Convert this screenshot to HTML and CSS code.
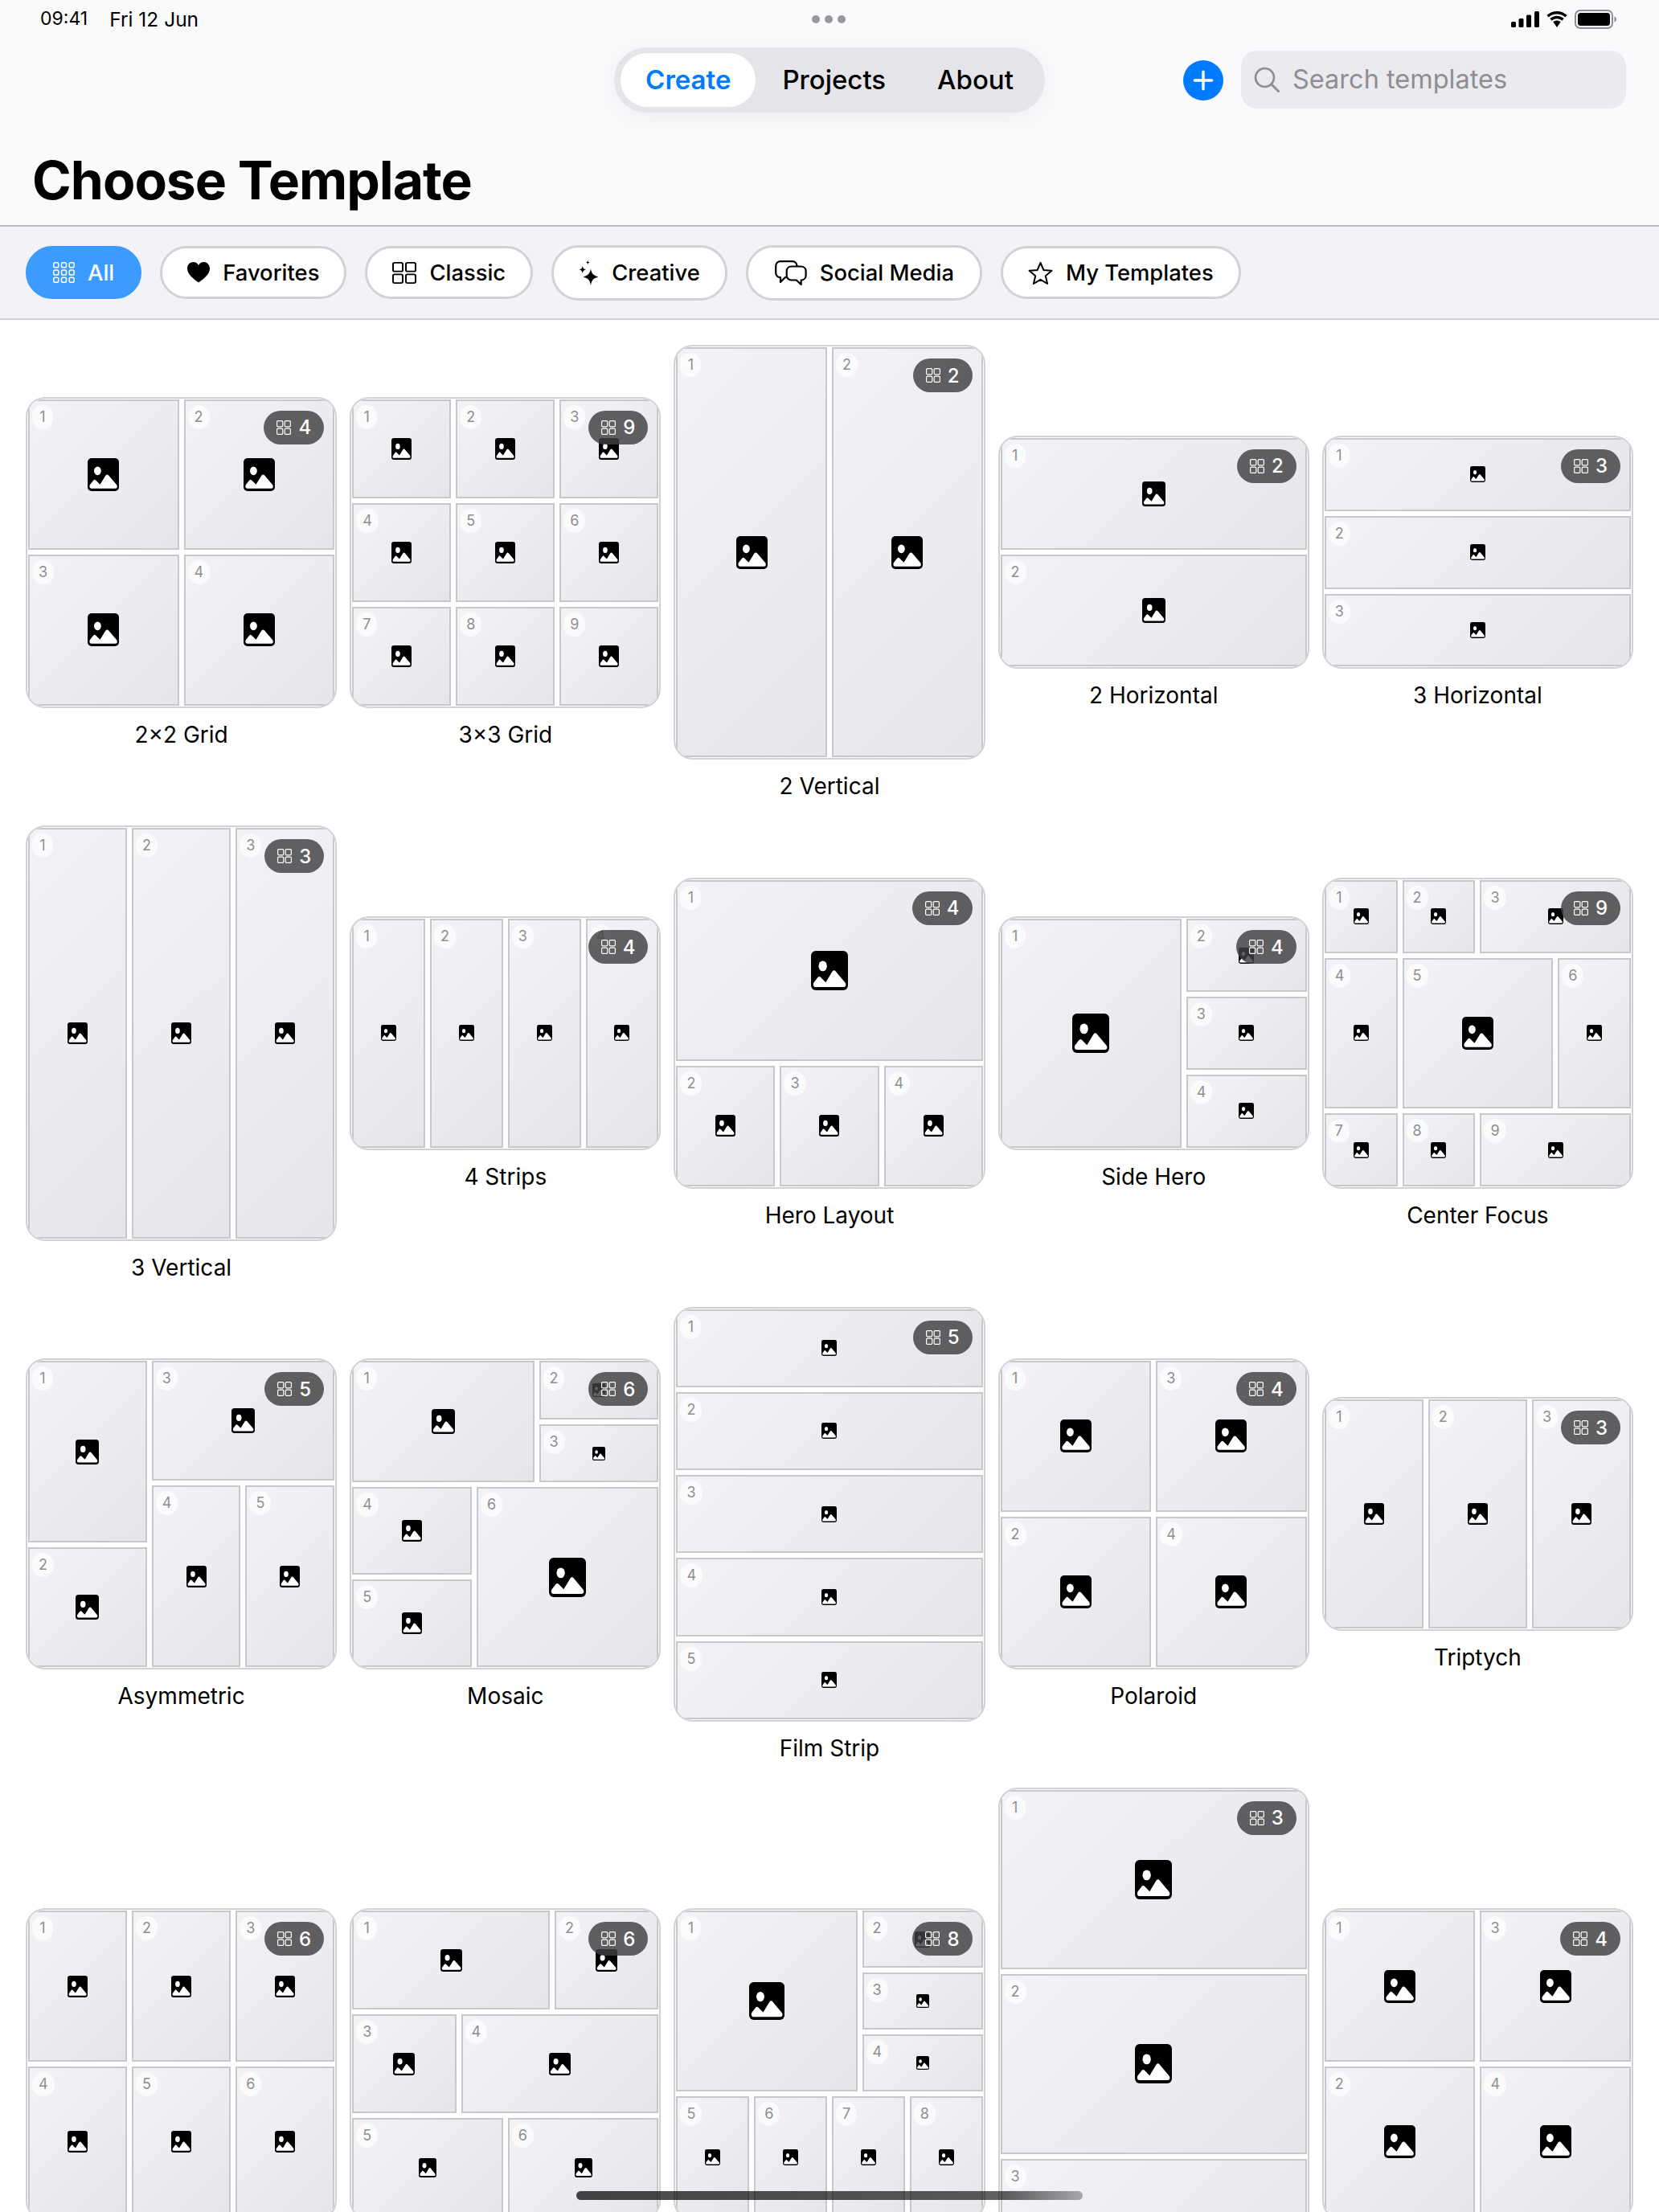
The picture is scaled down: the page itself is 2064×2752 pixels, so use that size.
FILE: index.html
```html
<!DOCTYPE html>
<html lang="en">
<head>
    <meta charset="UTF-8">
    <meta name="viewport" content="width=device-width, initial-scale=1.0">
    <title>Choose Template</title>
    <link rel="stylesheet" href="styles.css">
</head>
<body>
    <svg class="sprite" aria-hidden="true">
        <symbol id="i-photo" viewBox="0 0 39 41" preserveAspectRatio="none">
            <rect width="39" height="41" rx="5" fill="#000"/>
            <ellipse cx="12.4" cy="15.8" rx="4.4" ry="5.4" fill="#fff"/>
            <path d="M2.4 35.2c0-1.2.5-2.2 1.3-3.1l3.6-4.6c.8-1 2-1 2.8 0l5.4 5.3 6.9-11.3c1-1.5 2.8-1.5 3.8 0l9.8 11.6c.5.7.8 1.4.8 2.3 0 1.300-1 2.300-2.400 2.300H4.800c-1.400 0-2.400-1-2.400-2.500z" fill="#fff"/>
        </symbol>
        <symbol id="i-grid2" viewBox="0 0 18 18">
            <g fill="none" stroke="currentColor" stroke-width="1.2">
                <rect x=".6" y=".6" width="7.2" height="7.200" rx="1.200"/>
                <rect x="10.200" y=".6" width="7.200" height="7.200" rx="1.200"/>
                <rect x=".6" y="10.200" width="7.200" height="7.200" rx="1.200"/>
                <rect x="10.200" y="10.200" width="7.200" height="7.200" rx="1.200"/>
            </g>
        </symbol>
    </svg>

    <div class="app">
        <header class="top">
            <div class="status">
                <div class="status-time"><span>09:41</span><span class="status-date">Fri 12 Jun</span></div>
                <div class="status-dots"><i></i><i></i><i></i></div>
                <div class="status-icons">
                    <svg class="ic-signal" viewBox="0 0 35 20"><rect x="0" y="13" width="6" height="7" rx="1.500"/><rect x="9.500" y="9" width="6" height="11" rx="1.500"/><rect x="19" y="4.500" width="6" height="15.500" rx="1.500"/><rect x="29" y="0" width="6" height="20" rx="1.500"/></svg>
                    <svg class="ic-wifi" viewBox="0 0 28 20"><path d="M14 3.500c4 0 7.600 1.500 10.300 4.100l2.300-2.600C23.300 1.900 18.900 0 14 0S4.700 1.900 1.400 5l2.300 2.600C6.400 5 10 3.500 14 3.500z"/><path d="M14 9.200c2.500 0 4.700.9 6.400 2.500l2.300-2.600C20.400 7 17.400 5.700 14 5.700S7.600 7 5.300 9.100l2.300 2.600c1.700-1.600 3.900-2.500 6.400-2.500z"/><path d="M14 11.500c-1.900 0-3.500.7-4.700 1.800L14 20l4.700-6.700c-1.200-1.100-2.800-1.800-4.700-1.800z"/></svg>
                    <svg class="ic-battery" viewBox="0 0 52 24"><rect x="1" y="1" width="46" height="22" rx="6" fill="none" stroke="#8e8e93" stroke-width="2"/><rect x="4" y="4" width="40" height="16" rx="3.500"/><path d="M49.500 8.500c1.500.5 2.500 2 2.500 3.500s-1 3-2.500 3.500z" fill="#8e8e93"/></svg>
                </div>
            </div>

            <div class="toolbar">
                <div></div>
                <nav class="nav">
                    <a class="nav-item active">Create</a>
                    <a class="nav-item">Projects</a>
                    <a class="nav-item">About</a>
                </nav>
                <div class="tools">
                    <button class="add-btn">
                        <svg viewBox="0 0 24 24"><path d="M12 4v16M4 12h16" fill="none" stroke="#fff" stroke-width="2.600" stroke-linecap="round"/></svg>
                    </button>
                    <div class="search">
                        <svg viewBox="0 0 32 32"><circle cx="13.500" cy="13.500" r="11.500" fill="none" stroke="#8e8e93" stroke-width="2.600"/><path d="M22 22l8.500 8.500" fill="none" stroke="#8e8e93" stroke-width="3" stroke-linecap="round"/></svg>
                        <span>Search templates</span>
                    </div>
                </div>
            </div>

            <h1>Choose Template</h1>
        </header>

        <div class="filters">
            <button class="chip chip-on">
                <svg class="chip-all" viewBox="0 0 27 26"><g fill="none" stroke="#fff" stroke-width="1.500"><rect x=".8" y=".8" width="6" height="6" rx="1.800"/><rect x="10.500" y=".8" width="6" height="6" rx="1.800"/><rect x="20.200" y=".8" width="6" height="6" rx="1.800"/><rect x=".8" y="10" width="6" height="6" rx="1.800"/><rect x="10.500" y="10" width="6" height="6" rx="1.800"/><rect x="20.200" y="10" width="6" height="6" rx="1.800"/><rect x=".8" y="19.200" width="6" height="6" rx="1.800"/><rect x="10.500" y="19.200" width="6" height="6" rx="1.800"/><rect x="20.200" y="19.200" width="6" height="6" rx="1.800"/></g></svg>
                All
            </button>
            <button class="chip">
                <svg class="chip-heart" viewBox="0 0 28 26"><path d="M14 25.500C7 20.500 0 15 0 8c0-4.500 3.300-8 7.500-8C10.300 0 12.700 1.500 14 4c1.300-2.500 3.700-4 6.500-4C24.700 0 28 3.500 28 8c0 7-7 12.500-14 17.500z"/></svg>
                Favorites
            </button>
            <button class="chip">
                <svg class="chip-classic" viewBox="0 0 18 18" preserveAspectRatio="none"><use href="#i-grid2"/></svg>
                Classic
            </button>
            <button class="chip chip-tall">
                <svg class="chip-spark" viewBox="0 0 25 31"><path d="M15 10.500c1 5.700 3 8 9.500 10-6.500 1.500-8.500 4.300-9.500 10.500-1-6.200-3-9-9.500-10.500 6.500-2 8.500-4.300 9.500-10.500z"/><path d="M4.800 6.800c.5 2.900 1.300 3.900 4.300 4.700-3 .7-3.800 1.700-4.300 4.700-.5-3-1.300-4-4.300-4.700 3-.8 3.800-1.800 4.300-4.700z"/><path d="M11.300 0c.3 1.500.8 2 2.300 2.500-1.500.4-2 .9-2.300 2.500-.3-1.600-.8-2.100-2.300-2.500 1.500-.5 2-1 2.300-2.500z"/></svg>
                Creative
            </button>
            <button class="chip chip-tall chip-wide">
                <svg class="chip-social" viewBox="0 0 40 31"><g fill="none" stroke="#000" stroke-width="2.200" stroke-linejoin="round"><path d="M27.500 7.500V6.800c0-3.300-2.400-5.700-5.700-5.700H7C3.700 1.100 1.200 3.600 1.200 6.900v8.400c0 3.300 2.400 5.800 5.800 5.900v5.700l5.600-5.700h2"/><path d="M20.500 7.500h12.200c3.400 0 5.900 2.500 5.900 5.800v5.400c0 3.300-2.500 5.800-5.900 5.800v5.500l-5.900-5.500h-6.300c-3.300 0-5.800-2.500-5.800-5.800v-5.400c0-3.300 2.500-5.800 5.800-5.800z"/></g></svg>
                Social Media
            </button>
            <button class="chip">
                <svg class="chip-star" viewBox="0 0 31 29"><path d="M15.500 1.800l3.900 9.200 10 .8-7.600 6.500 2.300 9.700-8.600-5.200-8.600 5.200 2.300-9.700-7.600-6.500 10-.8z" fill="none" stroke="#000" stroke-width="2" stroke-linejoin="round"/></svg>
                My Templates
            </button>
        </div>

        <main class="gallery">

            <div class="tpl">
                <div class="card sq g-2x2">
                    <div class="cell"><span class="num">1</span><svg class="ph ph-lg"><use href="#i-photo"/></svg></div>
                    <div class="cell"><span class="num">2</span><svg class="ph ph-lg"><use href="#i-photo"/></svg></div>
                    <div class="cell"><span class="num">3</span><svg class="ph ph-lg"><use href="#i-photo"/></svg></div>
                    <div class="cell"><span class="num">4</span><svg class="ph ph-lg"><use href="#i-photo"/></svg></div>
                    <span class="badge"><svg><use href="#i-grid2"/></svg>4</span>
                </div>
                <div class="name">2×2 Grid</div>
            </div>

            <div class="tpl">
                <div class="card sq g-3x3">
                    <div class="cell"><span class="num">1</span><svg class="ph ph-md"><use href="#i-photo"/></svg></div>
                    <div class="cell"><span class="num">2</span><svg class="ph ph-md"><use href="#i-photo"/></svg></div>
                    <div class="cell"><span class="num">3</span><svg class="ph ph-md"><use href="#i-photo"/></svg></div>
                    <div class="cell"><span class="num">4</span><svg class="ph ph-md"><use href="#i-photo"/></svg></div>
                    <div class="cell"><span class="num">5</span><svg class="ph ph-md"><use href="#i-photo"/></svg></div>
                    <div class="cell"><span class="num">6</span><svg class="ph ph-md"><use href="#i-photo"/></svg></div>
                    <div class="cell"><span class="num">7</span><svg class="ph ph-md"><use href="#i-photo"/></svg></div>
                    <div class="cell"><span class="num">8</span><svg class="ph ph-md"><use href="#i-photo"/></svg></div>
                    <div class="cell"><span class="num">9</span><svg class="ph ph-md"><use href="#i-photo"/></svg></div>
                    <span class="badge"><svg><use href="#i-grid2"/></svg>9</span>
                </div>
                <div class="name">3×3 Grid</div>
            </div>

            <div class="tpl">
                <div class="card tall g-2col">
                    <div class="cell"><span class="num">1</span><svg class="ph ph-lg"><use href="#i-photo"/></svg></div>
                    <div class="cell"><span class="num">2</span><svg class="ph ph-lg"><use href="#i-photo"/></svg></div>
                    <span class="badge"><svg><use href="#i-grid2"/></svg>2</span>
                </div>
                <div class="name">2 Vertical</div>
            </div>

            <div class="tpl">
                <div class="card wide g-2row">
                    <div class="cell"><span class="num">1</span><svg class="ph ph-ml"><use href="#i-photo"/></svg></div>
                    <div class="cell"><span class="num">2</span><svg class="ph ph-ml"><use href="#i-photo"/></svg></div>
                    <span class="badge"><svg><use href="#i-grid2"/></svg>2</span>
                </div>
                <div class="name">2 Horizontal</div>
            </div>

            <div class="tpl">
                <div class="card wide g-3row">
                    <div class="cell"><span class="num">1</span><svg class="ph ph-sm"><use href="#i-photo"/></svg></div>
                    <div class="cell"><span class="num">2</span><svg class="ph ph-sm"><use href="#i-photo"/></svg></div>
                    <div class="cell"><span class="num">3</span><svg class="ph ph-sm"><use href="#i-photo"/></svg></div>
                    <span class="badge"><svg><use href="#i-grid2"/></svg>3</span>
                </div>
                <div class="name">3 Horizontal</div>
            </div>

            <div class="tpl">
                <div class="card tall g-3col">
                    <div class="cell"><span class="num">1</span><svg class="ph ph-md"><use href="#i-photo"/></svg></div>
                    <div class="cell"><span class="num">2</span><svg class="ph ph-md"><use href="#i-photo"/></svg></div>
                    <div class="cell"><span class="num">3</span><svg class="ph ph-md"><use href="#i-photo"/></svg></div>
                    <span class="badge"><svg><use href="#i-grid2"/></svg>3</span>
                </div>
                <div class="name">3 Vertical</div>
            </div>

            <div class="tpl">
                <div class="card wide g-4col">
                    <div class="cell"><span class="num">1</span><svg class="ph ph-sm"><use href="#i-photo"/></svg></div>
                    <div class="cell"><span class="num">2</span><svg class="ph ph-sm"><use href="#i-photo"/></svg></div>
                    <div class="cell"><span class="num">3</span><svg class="ph ph-sm"><use href="#i-photo"/></svg></div>
                    <div class="cell"><span class="num">4</span><svg class="ph ph-sm"><use href="#i-photo"/></svg></div>
                    <span class="badge"><svg><use href="#i-grid2"/></svg>4</span>
                </div>
                <div class="name">4 Strips</div>
            </div>

            <div class="tpl">
                <div class="card sq g-hero">
                    <div class="cell"><span class="num">1</span><svg class="ph ph-xl"><use href="#i-photo"/></svg></div>
                    <div class="cell"><span class="num">2</span><svg class="ph ph-md"><use href="#i-photo"/></svg></div>
                    <div class="cell"><span class="num">3</span><svg class="ph ph-md"><use href="#i-photo"/></svg></div>
                    <div class="cell"><span class="num">4</span><svg class="ph ph-md"><use href="#i-photo"/></svg></div>
                    <span class="badge"><svg><use href="#i-grid2"/></svg>4</span>
                </div>
                <div class="name">Hero Layout</div>
            </div>

            <div class="tpl">
                <div class="card wide g-side">
                    <div class="cell"><span class="num">1</span><svg class="ph ph-xl"><use href="#i-photo"/></svg></div>
                    <div class="cell"><span class="num">2</span><svg class="ph ph-sm"><use href="#i-photo"/></svg></div>
                    <div class="cell"><span class="num">3</span><svg class="ph ph-sm"><use href="#i-photo"/></svg></div>
                    <div class="cell"><span class="num">4</span><svg class="ph ph-sm"><use href="#i-photo"/></svg></div>
                    <span class="badge"><svg><use href="#i-grid2"/></svg>4</span>
                </div>
                <div class="name">Side Hero</div>
            </div>

            <div class="tpl">
                <div class="card sq g-focus">
                    <div class="cell"><span class="num">1</span><svg class="ph ph-sm"><use href="#i-photo"/></svg></div>
                    <div class="cell"><span class="num">2</span><svg class="ph ph-sm"><use href="#i-photo"/></svg></div>
                    <div class="cell"><span class="num">3</span><svg class="ph ph-sm"><use href="#i-photo"/></svg></div>
                    <div class="cell"><span class="num">4</span><svg class="ph ph-sm"><use href="#i-photo"/></svg></div>
                    <div class="cell"><span class="num">5</span><svg class="ph ph-lg"><use href="#i-photo"/></svg></div>
                    <div class="cell"><span class="num">6</span><svg class="ph ph-sm"><use href="#i-photo"/></svg></div>
                    <div class="cell"><span class="num">7</span><svg class="ph ph-sm"><use href="#i-photo"/></svg></div>
                    <div class="cell"><span class="num">8</span><svg class="ph ph-sm"><use href="#i-photo"/></svg></div>
                    <div class="cell"><span class="num">9</span><svg class="ph ph-sm"><use href="#i-photo"/></svg></div>
                    <span class="badge"><svg><use href="#i-grid2"/></svg>9</span>
                </div>
                <div class="name">Center Focus</div>
            </div>

            <div class="tpl">
                <div class="card sq g-asym">
                    <div class="cell"><span class="num">1</span><svg class="ph ph-ml"><use href="#i-photo"/></svg></div>
                    <div class="cell"><span class="num">2</span><svg class="ph ph-ml"><use href="#i-photo"/></svg></div>
                    <div class="cell"><span class="num">3</span><svg class="ph ph-ml"><use href="#i-photo"/></svg></div>
                    <div class="cell"><span class="num">4</span><svg class="ph ph-md"><use href="#i-photo"/></svg></div>
                    <div class="cell"><span class="num">5</span><svg class="ph ph-md"><use href="#i-photo"/></svg></div>
                    <span class="badge"><svg><use href="#i-grid2"/></svg>5</span>
                </div>
                <div class="name">Asymmetric</div>
            </div>

            <div class="tpl">
                <div class="card sq g-mosaic">
                    <div class="cell"><span class="num">1</span><svg class="ph ph-ml"><use href="#i-photo"/></svg></div>
                    <div class="cell"><span class="num">2</span><svg class="ph ph-xs"><use href="#i-photo"/></svg></div>
                    <div class="cell"><span class="num">3</span><svg class="ph ph-xs"><use href="#i-photo"/></svg></div>
                    <div class="cell"><span class="num">4</span><svg class="ph ph-md"><use href="#i-photo"/></svg></div>
                    <div class="cell"><span class="num">5</span><svg class="ph ph-md"><use href="#i-photo"/></svg></div>
                    <div class="cell"><span class="num">6</span><svg class="ph ph-xl"><use href="#i-photo"/></svg></div>
                    <span class="badge"><svg><use href="#i-grid2"/></svg>6</span>
                </div>
                <div class="name">Mosaic</div>
            </div>

            <div class="tpl">
                <div class="card tall g-5row">
                    <div class="cell"><span class="num">1</span><svg class="ph ph-sm"><use href="#i-photo"/></svg></div>
                    <div class="cell"><span class="num">2</span><svg class="ph ph-sm"><use href="#i-photo"/></svg></div>
                    <div class="cell"><span class="num">3</span><svg class="ph ph-sm"><use href="#i-photo"/></svg></div>
                    <div class="cell"><span class="num">4</span><svg class="ph ph-sm"><use href="#i-photo"/></svg></div>
                    <div class="cell"><span class="num">5</span><svg class="ph ph-sm"><use href="#i-photo"/></svg></div>
                    <span class="badge"><svg><use href="#i-grid2"/></svg>5</span>
                </div>
                <div class="name">Film Strip</div>
            </div>

            <div class="tpl">
                <div class="card sq g-2x2">
                    <div class="cell"><span class="num">1</span><svg class="ph ph-lg"><use href="#i-photo"/></svg></div>
                    <div class="cell"><span class="num">3</span><svg class="ph ph-lg"><use href="#i-photo"/></svg></div>
                    <div class="cell"><span class="num">2</span><svg class="ph ph-lg"><use href="#i-photo"/></svg></div>
                    <div class="cell"><span class="num">4</span><svg class="ph ph-lg"><use href="#i-photo"/></svg></div>
                    <span class="badge"><svg><use href="#i-grid2"/></svg>4</span>
                </div>
                <div class="name">Polaroid</div>
            </div>

            <div class="tpl">
                <div class="card wide g-3col">
                    <div class="cell"><span class="num">1</span><svg class="ph ph-md"><use href="#i-photo"/></svg></div>
                    <div class="cell"><span class="num">2</span><svg class="ph ph-md"><use href="#i-photo"/></svg></div>
                    <div class="cell"><span class="num">3</span><svg class="ph ph-md"><use href="#i-photo"/></svg></div>
                    <span class="badge"><svg><use href="#i-grid2"/></svg>3</span>
                </div>
                <div class="name">Triptych</div>
            </div>

            <div class="tpl">
                <div class="card sq g-3x2">
                    <div class="cell"><span class="num">1</span><svg class="ph ph-md"><use href="#i-photo"/></svg></div>
                    <div class="cell"><span class="num">2</span><svg class="ph ph-md"><use href="#i-photo"/></svg></div>
                    <div class="cell"><span class="num">3</span><svg class="ph ph-md"><use href="#i-photo"/></svg></div>
                    <div class="cell"><span class="num">4</span><svg class="ph ph-md"><use href="#i-photo"/></svg></div>
                    <div class="cell"><span class="num">5</span><svg class="ph ph-md"><use href="#i-photo"/></svg></div>
                    <div class="cell"><span class="num">6</span><svg class="ph ph-md"><use href="#i-photo"/></svg></div>
                    <span class="badge"><svg><use href="#i-grid2"/></svg>6</span>
                </div>
            </div>

            <div class="tpl">
                <div class="card sq g-steps">
                    <div class="cell"><span class="num">1</span><svg class="ph ph-st"><use href="#i-photo"/></svg></div>
                    <div class="cell"><span class="num">2</span><svg class="ph ph-st"><use href="#i-photo"/></svg></div>
                    <div class="cell"><span class="num">3</span><svg class="ph ph-st"><use href="#i-photo"/></svg></div>
                    <div class="cell"><span class="num">4</span><svg class="ph ph-st"><use href="#i-photo"/></svg></div>
                    <div class="cell"><span class="num">5</span><svg class="ph ph-ss"><use href="#i-photo"/></svg></div>
                    <div class="cell"><span class="num">6</span><svg class="ph ph-ss"><use href="#i-photo"/></svg></div>
                    <span class="badge"><svg><use href="#i-grid2"/></svg>6</span>
                </div>
            </div>

            <div class="tpl">
                <div class="card sq g-bento">
                    <div class="bento-top">
                        <div class="cell"><span class="num">1</span><svg class="ph ph-bg"><use href="#i-photo"/></svg></div>
                        <div class="bento-side">
                            <div class="cell"><span class="num">2</span><svg class="ph ph-sm"><use href="#i-photo"/></svg></div>
                            <div class="cell"><span class="num">3</span><svg class="ph ph-xs"><use href="#i-photo"/></svg></div>
                            <div class="cell"><span class="num">4</span><svg class="ph ph-xs"><use href="#i-photo"/></svg></div>
                        </div>
                    </div>
                    <div class="bento-bottom">
                        <div class="cell"><span class="num">5</span><svg class="ph ph-sm"><use href="#i-photo"/></svg></div>
                        <div class="cell"><span class="num">6</span><svg class="ph ph-sm"><use href="#i-photo"/></svg></div>
                        <div class="cell"><span class="num">7</span><svg class="ph ph-sm"><use href="#i-photo"/></svg></div>
                        <div class="cell"><span class="num">8</span><svg class="ph ph-sm"><use href="#i-photo"/></svg></div>
                    </div>
                    <span class="badge"><svg><use href="#i-grid2"/></svg>8</span>
                </div>
            </div>

            <div class="tpl">
                <div class="card story g-3row">
                    <div class="cell"><span class="num">1</span><svg class="ph ph-xl"><use href="#i-photo"/></svg></div>
                    <div class="cell"><span class="num">2</span><svg class="ph ph-xl"><use href="#i-photo"/></svg></div>
                    <div class="cell"><span class="num">3</span><svg class="ph ph-xl"><use href="#i-photo"/></svg></div>
                    <span class="badge"><svg><use href="#i-grid2"/></svg>3</span>
                </div>
            </div>

            <div class="tpl">
                <div class="card sq g-2x2">
                    <div class="cell"><span class="num">1</span><svg class="ph ph-lg"><use href="#i-photo"/></svg></div>
                    <div class="cell"><span class="num">3</span><svg class="ph ph-lg"><use href="#i-photo"/></svg></div>
                    <div class="cell"><span class="num">2</span><svg class="ph ph-lg"><use href="#i-photo"/></svg></div>
                    <div class="cell"><span class="num">4</span><svg class="ph ph-lg"><use href="#i-photo"/></svg></div>
                    <span class="badge"><svg><use href="#i-grid2"/></svg>4</span>
                </div>
            </div>

        </main>

        <div class="home-bar"></div>
    </div>
</body>
</html>
```

FILE: styles.css
```css
html, body {
    margin: 0;
    height: 100%;
    overflow: hidden;
}
body {
    font-family: Inter, "Liberation Sans", sans-serif;
    background: #fff;
    color: #000;
}
.sprite {
    position: absolute;
    width: 0;
    height: 0;
}
.app {
    position: relative;
    height: 2752px;
    overflow: hidden;
}

/* header */
.top {
    background: #fafafd;
    border-bottom: 2px solid #b9b9be;
    height: 280px;
}
.status {
    display: grid;
    grid-template-columns: 1fr auto 1fr;
    align-items: center;
    height: 48px;
    padding: 0 53px 0 50px;
    font-size: 23px;
}
.status-time {
    display: flex;
    gap: 27px;
}
.status-date {
    font-size: 24.5px;
}
.status-dots {
    display: flex;
    gap: 6px;
}
.status-dots i {
    width: 10px;
    height: 10px;
    border-radius: 50%;
    background: #98989d;
}
.status-icons {
    display: flex;
    justify-content: flex-end;
    align-items: center;
    gap: 8px;
}
.ic-signal {
    width: 35px;
    height: 20px;
}
.ic-wifi {
    width: 28px;
    height: 20px;
}
.ic-battery {
    width: 52px;
    height: 24px;
}
.toolbar {
    display: grid;
    grid-template-columns: 1fr auto 1fr;
    align-items: center;
    margin-top: 11px;
    padding: 0 41px;
    height: 81px;
}
.nav {
    display: flex;
    gap: 2px;
    padding: 7px 8px;
    background: #e4e4e9;
    border-radius: 40px;
    box-shadow: 0 6px 30px rgba(0,0,0,0.05);
}
.nav-item {
    padding: 0 31px;
    line-height: 67px;
    font-size: 33px;
    font-weight: 500;
    border-radius: 33px;
}
.nav-item.active {
    background: #fff;
    color: #007aff;
    font-weight: 600;
}
.tools {
    display: flex;
    justify-content: flex-end;
    align-items: center;
    gap: 22px;
}
.add-btn {
    display: flex;
    align-items: center;
    justify-content: center;
    width: 50px;
    height: 50px;
    padding: 0;
    border: none;
    border-radius: 50%;
    background: #007aff;
}
.add-btn svg {
    width: 32px;
    height: 32px;
}
.search {
    display: flex;
    align-items: center;
    gap: 16px;
    box-sizing: border-box;
    width: 479px;
    height: 72px;
    margin-bottom: 2px;
    padding-left: 16px;
    background: #eaeaef;
    border-radius: 20px;
    color: #8e8e93;
    font-size: 32.5px;
}
.search svg {
    width: 32px;
    height: 32px;
}
h1 {
    margin: 44px 0 0 40px;
    font-size: 66px;
    line-height: 80px;
    font-weight: 700;
    letter-spacing: -1px;
}

/* filter chips */
.filters {
    display: flex;
    align-items: center;
    gap: 23px;
    height: 114px;
    padding: 0 32px;
    background: #f2f2f7;
    border-bottom: 2px solid #d1d1d6;
}
.chip {
    display: flex;
    align-items: center;
    gap: 16px;
    box-sizing: border-box;
    height: 66px;
    padding: 0 31px;
    background: #fff;
    border: 3px solid #d1d1d6;
    border-radius: 33px;
    font-family: inherit;
    font-size: 27.4px;
    font-weight: 500;
    color: #000;
}
.chip-tall {
    height: 69px;
    border-radius: 34px;
}
.chip-wide {
    padding: 0 32px 0 33px;
}
.chip-on {
    background: #3b9bff;
    border-color: #3b9bff;
    color: #fff;
}
.chip-all {
    width: 27px;
    height: 26px;
}
.chip-heart {
    width: 28px;
    height: 26px;
}
.chip-classic {
    width: 30px;
    height: 27px;
}
.chip-spark {
    width: 25px;
    height: 31px;
}
.chip-social {
    width: 40px;
    height: 31px;
}
.chip-star {
    width: 31px;
    height: 29px;
}

/* template gallery */
.gallery {
    display: grid;
    grid-template-columns: repeat(5, 1fr);
    gap: 32px 16px;
    align-items: center;
    padding: 31px 32px;
}
.card {
    position: relative;
    box-sizing: border-box;
    display: grid;
    gap: 6px;
    padding: 1px;
    background: #fff;
    border: 2px solid #d1d1d6;
    border-radius: 24px;
    overflow: hidden;
}
.sq { aspect-ratio: 1 / 1; }
.tall { aspect-ratio: 3 / 4; }
.wide { aspect-ratio: 4 / 3; }
.story { aspect-ratio: 9 / 16; }
.cell {
    position: relative;
    box-sizing: border-box;
    display: flex;
    align-items: center;
    justify-content: center;
    min-width: 0;
    min-height: 0;
    border: 2px solid #c7c7cc;
    background: linear-gradient(135deg, #f2f2f7, #e5e5ea);
}
.num {
    position: absolute;
    top: 5px;
    left: 3px;
    min-width: 10px;
    padding: 0 8px;
    line-height: 30px;
    font-size: 18px;
    text-align: center;
    color: #8e8e93;
    background: rgba(255,255,255,0.7);
    border-radius: 15px;
}
.ph { display: block; }
.ph-xs { width: 16px; height: 17px; }
.ph-sm { width: 19px; height: 20px; }
.ph-ss { width: 22px; height: 24px; }
.ph-md { width: 25px; height: 27px; }
.ph-st { width: 27px; height: 28px; }
.ph-ml { width: 29px; height: 31px; }
.ph-lg { width: 39px; height: 41px; }
.ph-bg { width: 44px; height: 47px; }
.ph-xl { width: 46px; height: 49px; }
.badge {
    position: absolute;
    top: 15px;
    right: 14px;
    display: flex;
    align-items: center;
    gap: 9px;
    height: 42px;
    padding: 0 16px;
    border-radius: 21px;
    background: rgba(64,64,66,0.82);
    color: #fff;
    font-size: 24px;
    font-weight: 500;
}
.badge svg {
    width: 18px;
    height: 18px;
}
.name {
    margin-top: 17px;
    text-align: center;
    font-size: 28px;
    line-height: 33px;
}

/* cell arrangements */
.g-2x2 { grid-template: 1fr 1fr / 1fr 1fr; }
.g-3x3 { grid-template: repeat(3, 1fr) / repeat(3, 1fr); }
.g-3x2 { grid-template: 1fr 1fr / repeat(3, 1fr); }
.g-2col { grid-template-columns: 1fr 1fr; }
.g-3col { grid-template-columns: repeat(3, 1fr); }
.g-4col { grid-template-columns: repeat(4, 1fr); }
.g-2row { grid-template-rows: 1fr 1fr; }
.g-3row { grid-template-rows: repeat(3, 1fr); }
.g-5row { grid-template-rows: repeat(5, 1fr); }

.g-hero { grid-template: 3fr 2fr / repeat(3, 1fr); }
.g-hero .cell:nth-child(1) { grid-column: 1 / -1; }

.g-side { grid-template: repeat(3, 1fr) / 3fr 2fr; }
.g-side .cell:nth-child(1) { grid-row: 1 / -1; }

.g-focus { grid-template: repeat(4, 1fr) / repeat(4, 1fr); }
.g-focus .cell:nth-child(3),
.g-focus .cell:nth-child(5),
.g-focus .cell:nth-child(9) { grid-column: span 2; }
.g-focus .cell:nth-child(4),
.g-focus .cell:nth-child(5),
.g-focus .cell:nth-child(6) { grid-row: 2 / span 2; }

.g-asym { grid-template: repeat(5, 1fr) / 4fr 3fr 3fr; }
.g-asym .cell:nth-child(1) { grid-area: 1 / 1 / 4 / 2; }
.g-asym .cell:nth-child(2) { grid-area: 4 / 1 / 6 / 2; }
.g-asym .cell:nth-child(3) { grid-area: 1 / 2 / 3 / 4; }
.g-asym .cell:nth-child(4) { grid-area: 3 / 2 / 6 / 3; }
.g-asym .cell:nth-child(5) { grid-area: 3 / 3 / 6 / 4; }

.g-mosaic { grid-template: 2fr 2fr 3fr 3fr / repeat(5, 1fr); }
.g-mosaic .cell:nth-child(1) { grid-area: 1 / 1 / 3 / 4; }
.g-mosaic .cell:nth-child(2) { grid-area: 1 / 4 / 2 / 6; }
.g-mosaic .cell:nth-child(3) { grid-area: 2 / 4 / 3 / 6; }
.g-mosaic .cell:nth-child(4) { grid-area: 3 / 1 / 4 / 3; }
.g-mosaic .cell:nth-child(5) { grid-area: 4 / 1 / 5 / 3; }
.g-mosaic .cell:nth-child(6) { grid-area: 3 / 3 / 5 / 6; }

.g-steps { grid-template: repeat(3, 1fr) / 1.18fr 1.18fr 1fr 1fr 1.18fr 1.18fr; }
.g-steps .cell:nth-child(1),
.g-steps .cell:nth-child(4) { grid-column: span 4; }
.g-steps .cell:nth-child(2),
.g-steps .cell:nth-child(3) { grid-column: span 2; }
.g-steps .cell:nth-child(5),
.g-steps .cell:nth-child(6) { grid-column: span 3; }

.g-bento { grid-template-rows: 3fr 2fr; }
.bento-top {
    display: grid;
    grid-template-columns: 3fr 2fr;
    gap: 6px;
    min-height: 0;
}
.bento-side {
    display: grid;
    grid-template-rows: repeat(3, 1fr);
    gap: 6px;
    min-height: 0;
}
.bento-bottom {
    display: grid;
    grid-template-columns: repeat(4, 1fr);
    gap: 6px;
    min-height: 0;
}

.home-bar {
    position: absolute;
    left: 717px;
    bottom: 15px;
    width: 630px;
    height: 11px;
    border-radius: 6px;
    background: linear-gradient(90deg, rgba(0,0,0,0.72), rgba(0,0,0,0.62) 85%, rgba(0,0,0,0.3));
}
```
